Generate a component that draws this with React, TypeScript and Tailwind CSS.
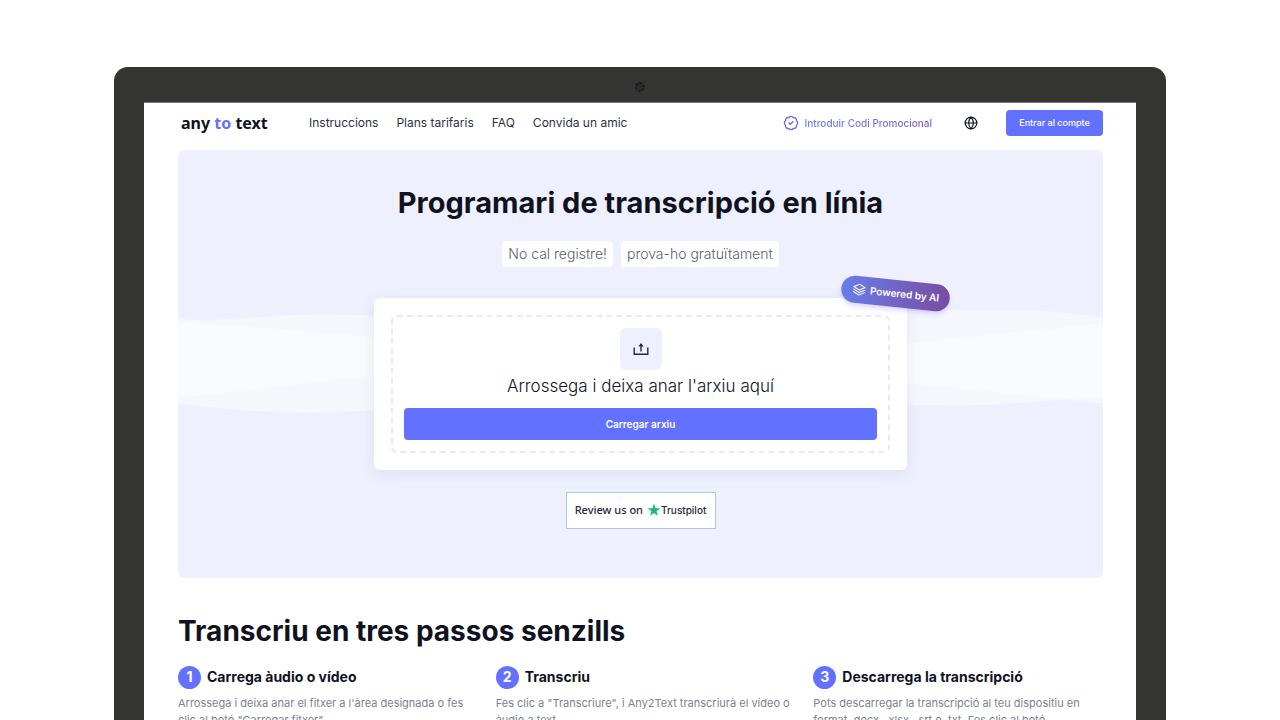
import { BadgeCheck, Globe } from "lucide-react";

type Step = {
  id: number;
  title: string;
  lines: string[];
};

const navLinks = ["Instruccions", "Plans tarifaris", "FAQ", "Convida un amic"];

const steps: Step[] = [
  {
    id: 1,
    title: "Carrega àudio o vídeo",
    lines: [
      "Arrossega i deixa anar el fitxer a l'àrea designada o fes",
      'clic al botó "Carregar fitxer".',
    ],
  },
  {
    id: 2,
    title: "Transcriu",
    lines: [
      'Fes clic a "Transcriure", i Any2Text transcriurà el vídeo o',
      "àudio a text.",
    ],
  },
  {
    id: 3,
    title: "Descarrega la transcripció",
    lines: [
      "Pots descarregar la transcripció al teu dispositiu en",
      "format .docx, .xlsx, .srt o .txt. Fes clic al botó",
    ],
  },
];

function Header() {
  return (
    <header className="flex items-center pt-[7px] pb-3.5">
      <a
        href="#"
        className="ml-[3px] w-[128px] font-['Noto_Sans'] text-base leading-6 font-bold text-[#10131f]"
      >
        any <span className="text-[#6271ff]">to</span> text
      </a>

      <nav className="flex items-center gap-[18px] text-xs text-[#2b3346]">
        {navLinks.map((label) => (
          <a key={label} href="#">
            {label}
          </a>
        ))}
      </nav>

      <div className="ml-auto flex items-center">
        <a href="#" className="flex items-center gap-1.5 text-[10px] font-medium">
          <BadgeCheck className="size-4 text-[#6868e0]" strokeWidth={2} />
          <span className="bg-linear-to-r from-[#667eea] to-[#7a5cd0] bg-clip-text text-transparent">
            Introduir Codi Promocional
          </span>
        </a>
        <button type="button" aria-label="Idioma" className="mr-7 ml-8 text-[#10131f]">
          <Globe className="size-3.5" strokeWidth={2} />
        </button>
        <button
          type="button"
          className="h-[26px] w-[97px] rounded bg-[#6271ff] text-[9px] font-medium text-white"
        >
          Entrar al compte
        </button>
      </div>
    </header>
  );
}

function Waves() {
  return (
    <svg
      className="absolute inset-0 size-full"
      viewBox="0 0 924 427"
      preserveAspectRatio="none"
      aria-hidden="true"
    >
      <path
        d="M0 167 Q18 170 30 170 C80 167 110 164 145 164 C300 165 480 190 600 176 C680 164 720 160 780 160 L856 160 C885 162 905 165 924 167 L924 253 L887 249 C840 252 800 257 728 254 C560 246 380 256 190 260 C110 265 50 259 0 253 Z"
        fill="#f6f7fd"
      />
      <path
        d="M0 172 C70 176 130 182 190 186 C400 205 560 205 728 193 L924 173 L924 247 L887 248 C840 245 790 238 728 233 C560 216 380 218 190 226 C120 232 60 242 0 246 Z"
        fill="#fafbff"
      />
    </svg>
  );
}

function UploadIcon() {
  return (
    <svg
      className="h-3.5 w-4"
      viewBox="0 0 16 14"
      fill="none"
      stroke="#252938"
      strokeWidth="1.4"
      aria-hidden="true"
    >
      <path d="M1.2 5.5V12.3H14.8V5.5" />
      <path d="M8 9.5V2" />
      <path d="M5.4 4.6L8 1L10.6 4.6Z" fill="#252938" stroke="none" />
    </svg>
  );
}

function AiBadge() {
  return (
    <div className="absolute -top-[18px] -right-[43px] flex h-[27px] w-[109px] rotate-6 items-center gap-1 rounded-full bg-linear-to-r from-[#667eea] to-[#764ba2] pl-[11px] text-[10px] font-semibold whitespace-nowrap text-white shadow-md shadow-indigo-500/20">
      <svg
        className="size-3.5 shrink-0"
        viewBox="0 0 14 14"
        fill="none"
        stroke="currentColor"
        strokeLinejoin="round"
        strokeLinecap="round"
        aria-hidden="true"
      >
        <path d="M7 1L12.6 3.9L7 6.8L1.4 3.9Z" />
        <path d="M1.4 6.4L7 9.3L12.6 6.4M1.4 8.9L7 11.8L12.6 8.9" />
      </svg>
      Powered by AI
    </div>
  );
}

function UploadCard() {
  return (
    <div className="relative mt-[31px] w-full max-w-[533px] rounded-md bg-white p-[17px] shadow-[0_4px_16px_rgba(80,90,150,0.1)]">
      <div className="flex flex-col items-center rounded-md border-2 border-dashed border-[#e8e9f5] px-[11px] pt-[11px] pb-[11px]">
        <div className="flex size-[42px] items-center justify-center rounded-md bg-[#eef0fd]">
          <UploadIcon />
        </div>
        <p className="mt-0.5 text-[17px] leading-7 font-light text-[#10131f]">
          Arrossega i deixa anar l'arxiu aquí
        </p>
        <button
          type="button"
          className="mt-2 h-8 w-full rounded bg-[#6271ff] text-[10px] font-semibold text-white"
        >
          Carregar arxiu
        </button>
      </div>
      <AiBadge />
    </div>
  );
}

function Hero() {
  return (
    <section className="relative rounded-md bg-[#eef0fd]">
      <Waves />
      <div className="relative flex flex-col items-center px-6 pt-[33px] pb-[49px]">
        <h1 className="text-[29px] leading-10 font-bold text-[#10131f]">
          Programari de transcripció en línia
        </h1>
        <div className="mt-[18px] flex gap-2 text-sm leading-[26px] font-light text-[#596070]">
          <span className="rounded bg-white px-1.5">No cal registre!</span>
          <span className="rounded bg-white px-1.5">prova-ho gratuïtament</span>
        </div>
        <UploadCard />
        <a
          href="#"
          className="mt-[22px] flex h-[37px] w-[150px] items-center justify-center gap-1 border border-[#a9cdd2] bg-white whitespace-nowrap text-[#252938]"
        >
          <span className="font-['Noto_Sans'] text-[11px] font-medium">
            Review us on
          </span>
          <span className="flex items-center text-[10px] font-medium">
            <svg className="mb-0.5 size-3.5" viewBox="0 0 24 24" aria-hidden="true">
              <path
                d="M12 1L14.7 9H23L16.3 14L18.8 22L12 17.1L5.2 22L7.7 14L1 9H9.3Z"
                fill="#1fb57f"
              />
            </svg>
            Trustpilot
          </span>
        </a>
      </div>
    </section>
  );
}

function Steps() {
  return (
    <section className="pt-[33px]">
      <h2 className="text-[28px] leading-10 font-bold text-[#10131f]">
        Transcriu en tres passos senzills
      </h2>
      <div className="mt-3.5 grid grid-cols-3 gap-7">
        {steps.map((step) => (
          <div key={step.id}>
            <div className="flex items-center gap-1.5">
              <span className="flex size-[23px] items-center justify-center rounded-full bg-[#6271ff] text-sm font-bold text-white">
                {step.id}
              </span>
              <h3 className="text-sm leading-6 font-bold text-[#10131f]">
                {step.title}
              </h3>
            </div>
            <p className="mt-1.5 text-[11px] leading-[17px] whitespace-nowrap text-[#7c8292]">
              {step.lines.map((line) => (
                <span key={line} className="block">
                  {line}
                </span>
              ))}
            </p>
          </div>
        ))}
      </div>
    </section>
  );
}

export default function App() {
  return (
    <div className="h-screen overflow-hidden bg-white px-[114px] pt-[67px] font-['Inter',sans-serif]">
      <div className="rounded-t-[14px] bg-[#343432] px-[30px]">
        <div className="flex h-9 items-center justify-center border-b border-[#77777a] pt-1">
          <span className="size-2.5 rounded-full border-2 border-dotted border-[#171723] bg-[#2a2a2c]" />
        </div>
        <main className="bg-white pr-[33px] pb-16 pl-[34px]">
          <Header />
          <Hero />
          <Steps />
        </main>
      </div>
    </div>
  );
}
